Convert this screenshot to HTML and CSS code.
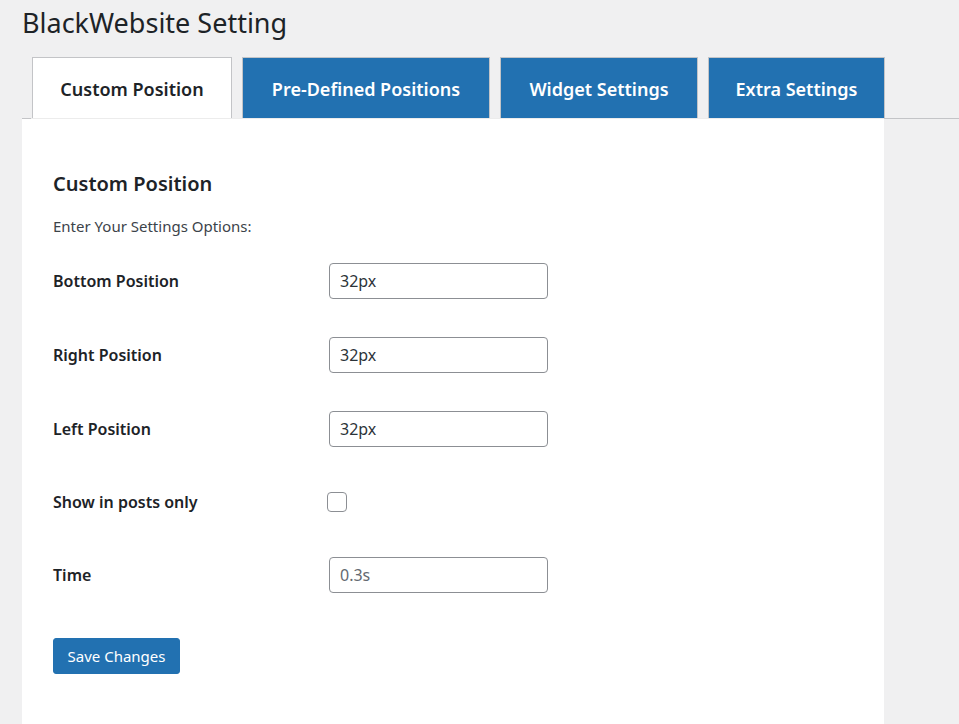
FILE: index.html
```html
<!DOCTYPE html>
<html lang="en">
<head>
<meta charset="utf-8">
<title>BlackWebsite Setting</title>
<link rel="stylesheet" href="styles.css">
</head>
<body>
<div class="wrap">
  <h1 class="page-title">BlackWebsite Setting</h1>
  <nav class="tabs">
    <a class="tab tab-active">Custom Position</a>
    <a class="tab">Pre-Defined Positions</a>
    <a class="tab">Widget Settings</a>
    <a class="tab">Extra Settings</a>
  </nav>
  <div class="panel">
    <h2 class="section-title">Custom Position</h2>
    <p class="desc">Enter Your Settings Options:</p>
    <div class="form">
      <div class="row">
        <label class="label">Bottom Position</label>
        <input class="field" type="text" value="32px">
      </div>
      <div class="row">
        <label class="label">Right Position</label>
        <input class="field" type="text" value="32px">
      </div>
      <div class="row">
        <label class="label">Left Position</label>
        <input class="field" type="text" value="32px">
      </div>
      <div class="row row-check">
        <label class="label">Show in posts only</label>
        <span class="checkbox"></span>
      </div>
      <div class="row">
        <label class="label">Time</label>
        <input class="field" type="text" placeholder="0.3s">
      </div>
    </div>
    <button class="save" type="button">Save Changes</button>
  </div>
</div>
</body>
</html>
```
FILE: styles.css
```css
* { box-sizing: border-box; }
html, body {
  margin: 0;
  padding: 0;
  background: #f0f0f1;
  height: 100%;
  overflow: hidden;
}
body {
  font-family: "Noto Sans", "Open Sans", sans-serif;
  color: #1d2327;
}
.wrap {
  padding-left: 22px;
  display: flex;
  flex-direction: column;
  min-height: 100%;
}
.page-title {
  margin: 0;
  height: 57px;
  padding-top: 6px;
  font-size: 27px;
  font-weight: 400;
  line-height: 34px;
  color: #1d2327;
}
.tabs {
  display: flex;
  gap: 10px;
  padding-left: 10px;
  border-bottom: 1px solid #c3c4c7;
}
.tab {
  display: flex;
  align-items: center;
  justify-content: center;
  height: 61px;
  padding: 2px 20px 0;
  border: 1px solid #c3c4c7;
  border-bottom: none;
  background: #2271b1;
  color: #fff;
  font-size: 18px;
  font-weight: 600;
  text-decoration: none;
  white-space: nowrap;
}
.tab:nth-child(1) { width: 200px; }
.tab:nth-child(2) { width: 248px; }
.tab:nth-child(3) { width: 198px; }
.tab:nth-child(4) { width: 177px; }
.tab-active {
  background: #fff;
  color: #1d2327;
}
.panel {
  flex: 1;
  width: 862px;
  margin-top: -1px;
  border-top: 1px solid #f0f0f1;
  border-image: linear-gradient(to right, #c3c4c7 10px, #ececec 10px) 1;
  border-left: 0;
  border-right: 0;
  border-bottom: 0;
  background: #fff;
  padding: 51px 31px 0;
}
.section-title {
  margin: 0;
  font-size: 20px;
  font-weight: 600;
  line-height: 28px;
  color: #1d2327;
}
.desc {
  margin: 18px 0 0;
  font-size: 15px;
  line-height: 20px;
  color: #3c434a;
}
.form {
  margin-top: 8px;
  display: flex;
  flex-direction: column;
}
.row {
  display: flex;
  align-items: center;
  height: 74px;
}
.row-check { height: 72px; }
.label {
  width: 276px;
  flex: none;
  font-size: 16px;
  font-weight: 600;
  color: #1d2327;
}
.field {
  width: 219px;
  height: 36px;
  border: 1px solid #8c8f94;
  border-radius: 4px;
  padding: 0 10px;
  font-family: inherit;
  font-size: 16px;
  color: #2c3338;
  background: #fff;
  outline: none;
}
.field::placeholder { color: #646970; opacity: 1; }
.checkbox {
  display: block;
  width: 20px;
  height: 20px;
  margin-left: -2px;
  border: 1px solid #8c8f94;
  border-radius: 4px;
  background: #fff;
}
.save {
  margin-top: 26px;
  width: 127px;
  height: 36px;
  border: 1px solid #2271b1;
  border-radius: 3px;
  background: #2271b1;
  color: #fff;
  font-family: inherit;
  font-size: 15px;
  padding: 0;
}
```
